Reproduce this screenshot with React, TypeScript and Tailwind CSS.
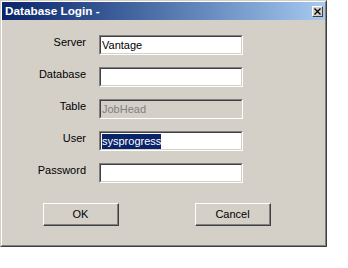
import React from "react";

const font = { fontFamily: '"Liberation Sans", Arial, sans-serif' };

function Field({ label, children, disabled }: { label: string; children?: React.ReactNode; disabled?: boolean }) {
  return (
    <div className="flex items-start h-[20px]">
      <div className="w-[84px] text-right text-[11px] leading-[13px] pt-[1px] text-black">{label}</div>
      <div className="ml-[13px] w-[144px] h-[20px] border border-t-[#808080] border-l-[#808080] border-r-white border-b-white">
        <div
          className={`w-full h-full border border-t-[#404040] border-l-[#404040] border-r-[#d4d0c8] border-b-[#d4d0c8] flex items-center pl-[1px] text-[11px] leading-[13px] ${
            disabled ? "bg-[#d4d0c8] text-[#808080]" : "bg-white text-black"
          }`}
        >
          {children}
        </div>
      </div>
    </div>
  );
}

function Btn({ label }: { label: string }) {
  return (
    <div className="w-[76px] h-[23px] border border-t-white border-l-white border-r-[#404040] border-b-[#404040]">
      <div className="w-full h-full border-r border-b border-r-[#808080] border-b-[#808080] flex items-center justify-center text-[11px] leading-[13px] text-black">
        {label}
      </div>
    </div>
  );
}

export default function App() {
  return (
    <div className="w-[348px] h-[268px] bg-white" style={font}>
      <div className="w-[327px] h-[247px] border border-t-[#d4d0c8] border-l-[#d4d0c8] border-r-[#404040] border-b-[#404040]">
        <div className="w-full h-full border border-t-white border-l-white border-r-[#808080] border-b-[#808080] bg-[#d4d0c8] flex flex-col">
          <div className="h-[18px] bg-gradient-to-r from-[#0a246a] to-[#a6caf0] flex items-center justify-between pl-[3px] pr-[2px]">
            <span className="text-white font-bold text-[11.75px] leading-[14px]">Database Login -</span>
            <div className="w-[11px] h-[11px] border border-t-white border-l-white border-r-[#404040] border-b-[#404040] bg-[#d4d0c8] flex items-center justify-center">
              <svg width="7" height="7" viewBox="0 0 7 7">
                <path d="M0.5 0.5 L6.5 6.5 M6.5 0.5 L0.5 6.5" stroke="#000" strokeWidth="1.3" />
              </svg>
            </div>
          </div>
          <div className="flex flex-col gap-[12px] pt-[15px]">
            <Field label="Server">Vantage</Field>
            <Field label="Database" />
            <Field label="Table" disabled>JobHead</Field>
            <Field label="User">
              <span className="bg-[#0a246a] text-white h-[15px] leading-[15px] inline-block">sysprogress</span>
            </Field>
            <Field label="Password" />
          </div>
          <div className="flex pt-[20px] pl-[41px] gap-[76px]">
            <Btn label="OK" />
            <Btn label="Cancel" />
          </div>
        </div>
      </div>
    </div>
  );
}
